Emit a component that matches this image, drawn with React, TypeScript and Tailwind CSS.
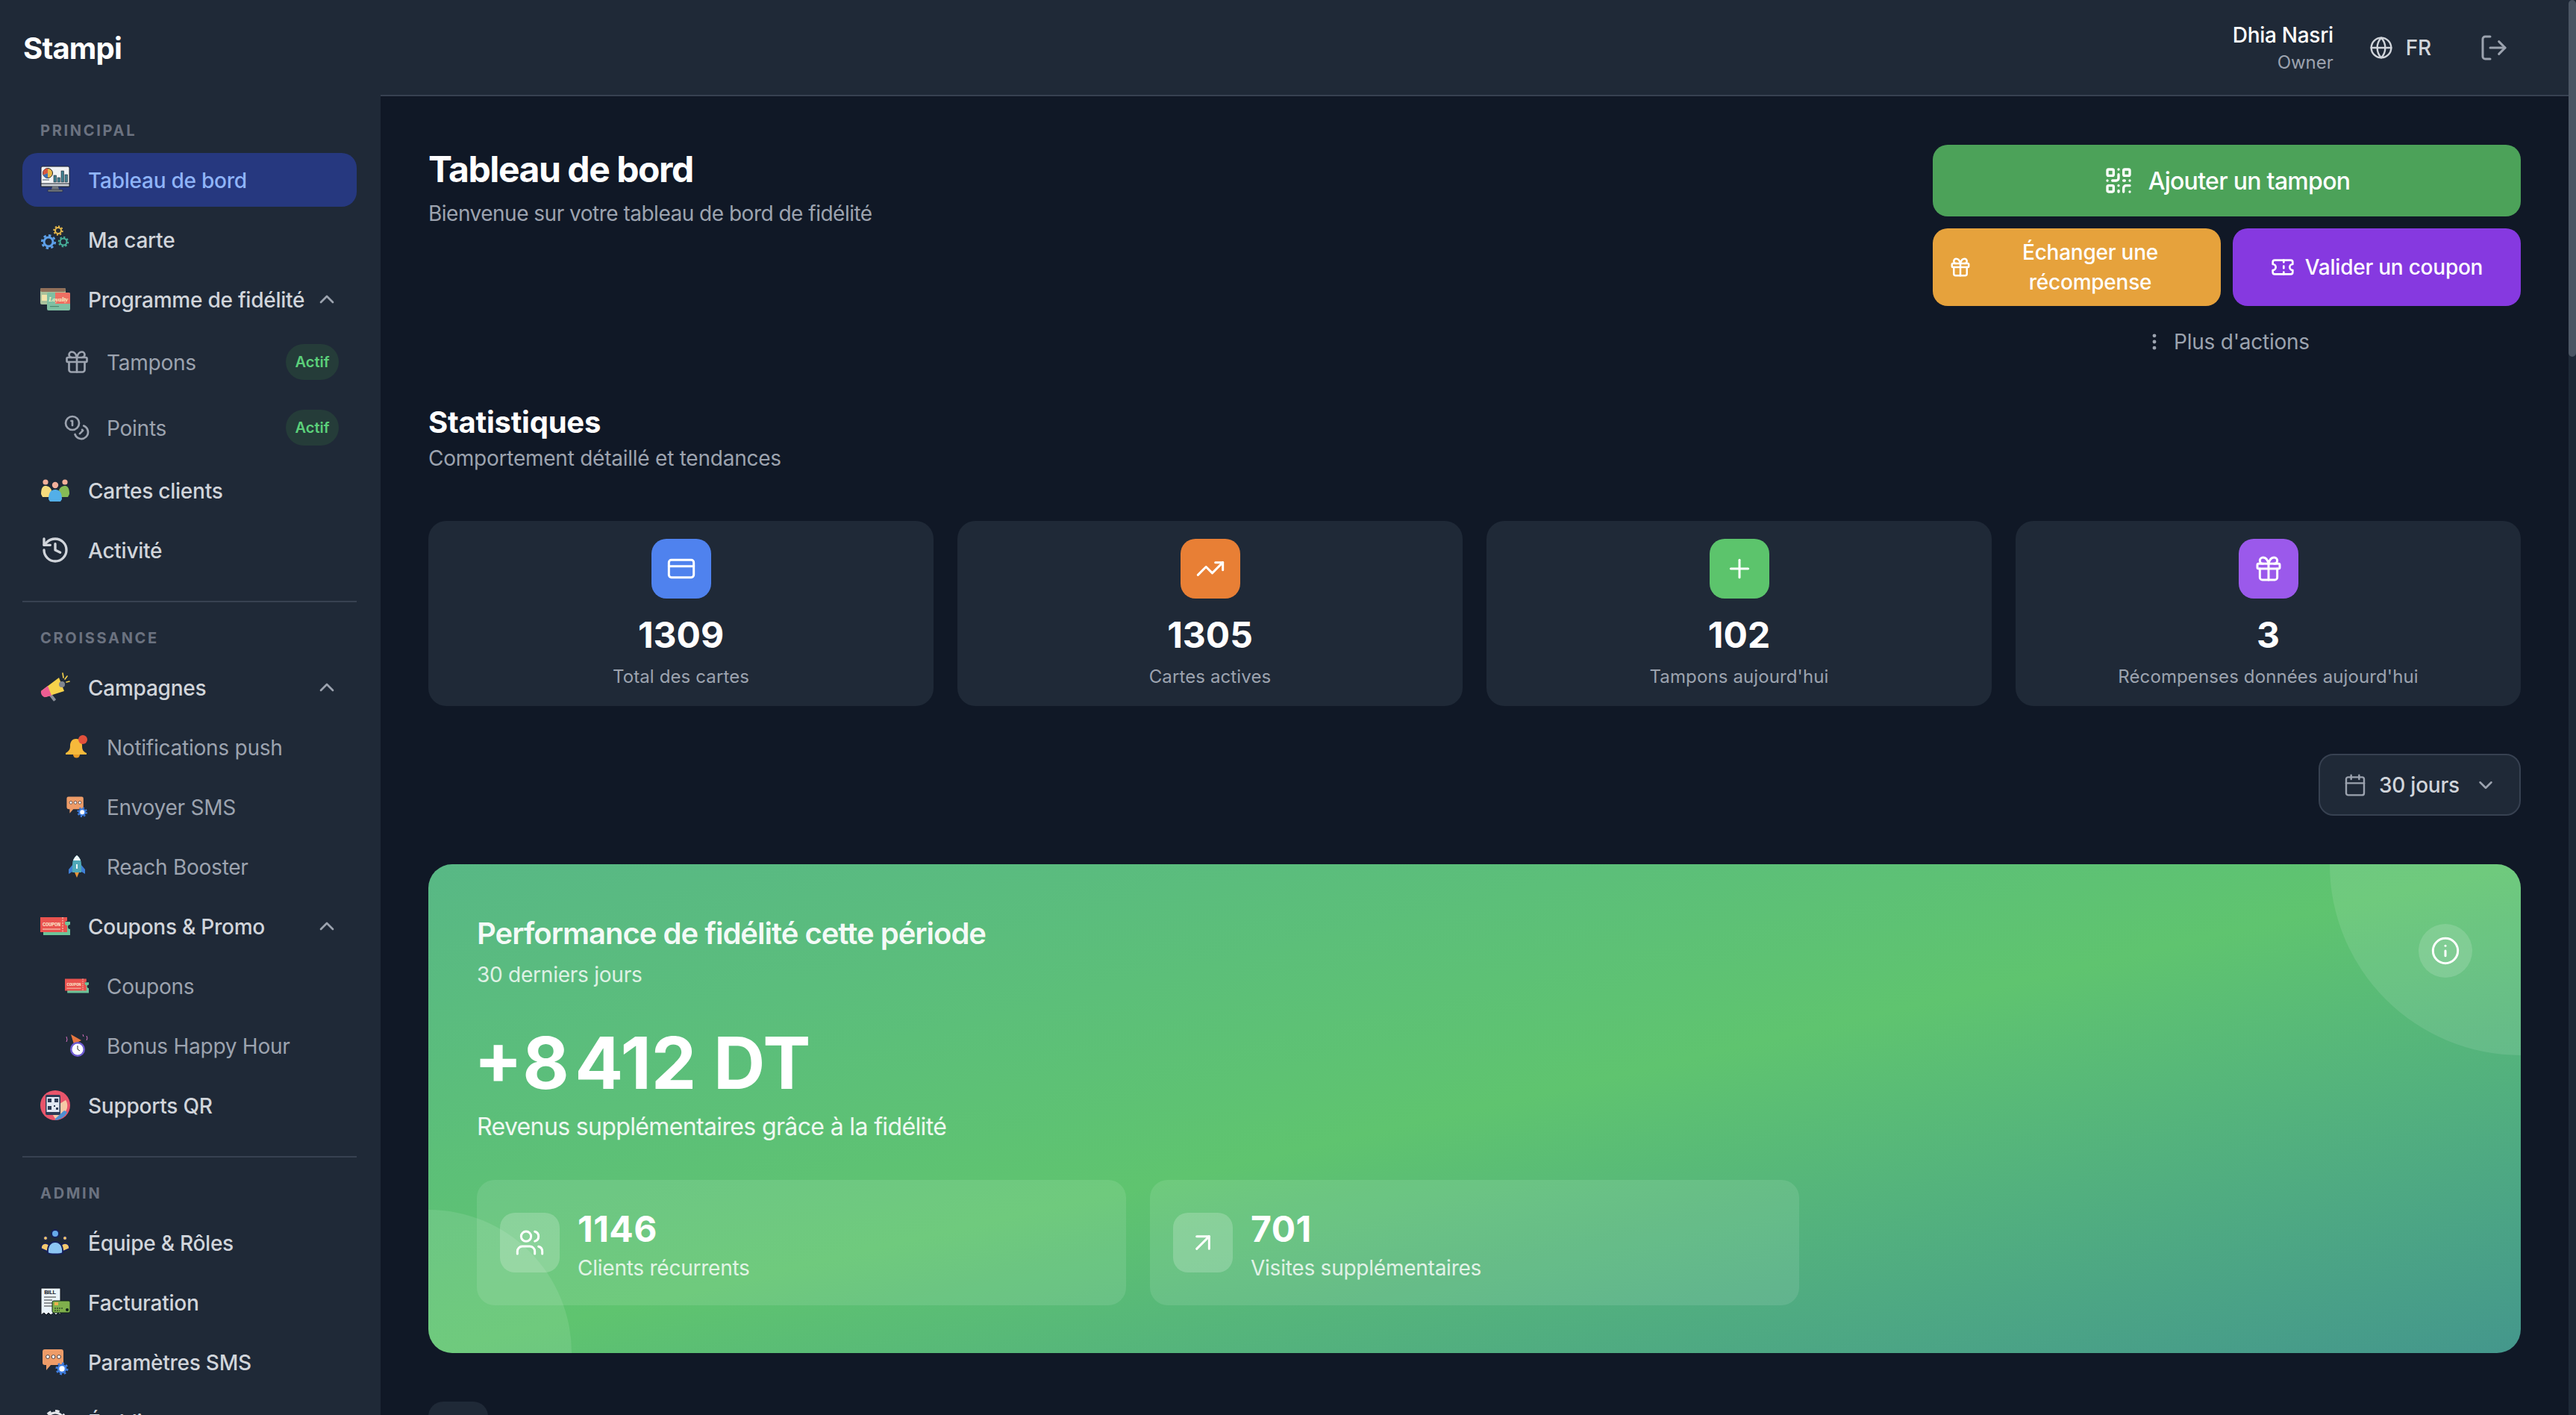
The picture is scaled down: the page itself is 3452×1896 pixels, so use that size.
import React from 'react'
import {
  ArrowUpRight, Calendar, ChevronDown, ChevronUp, Coins, CreditCard, EllipsisVertical, Gift, Globe,
  History, Info, LogOut, Plus, QrCode, Ticket, TrendingUp, Users,
} from 'lucide-react'

const Gear = ({ x, y, r, color, w = 2 }: { x: number; y: number; r: number; color: string; w?: number }) => (
  <g fill="none" stroke={color}>
    <circle cx={x} cy={y} r={r} strokeWidth={w} />
    <circle cx={x} cy={y} r={r + w * 0.9} strokeWidth={w * 0.9} pathLength={16} strokeDasharray="1 1" />
  </g>
)

const IconBoard = () => (
  <svg viewBox="0 0 40 40" className="w-full h-full">
    <rect x="1" y="2" width="38" height="27" rx="2" fill="#f1f3f4" stroke="#1f2430" strokeWidth="1" />
    <rect x="1" y="25" width="38" height="4" fill="#c9ced3" stroke="#1f2430" strokeWidth="1" />
    <circle cx="10" cy="11" r="6.5" fill="#e9b949" stroke="#1f2430" strokeWidth="1" />
    <path d="M10 11V4.5a6.5 6.5 0 0 0-6 9z" fill="#d9573f" />
    <path d="M10 11l-6 2.5a6.5 6.5 0 0 0 6 4z" fill="#3f6fb5" />
    <rect x="3" y="19" width="9" height="2" fill="#9aa1a8" />
    <rect x="18" y="14" width="3.5" height="9" fill="#41808f" stroke="#1f2430" strokeWidth=".6" />
    <rect x="23" y="17" width="3.5" height="6" fill="#41808f" stroke="#1f2430" strokeWidth=".6" />
    <rect x="28" y="8" width="3.5" height="15" fill="#41808f" stroke="#1f2430" strokeWidth=".6" />
    <rect x="33" y="13" width="3.5" height="10" fill="#41808f" stroke="#1f2430" strokeWidth=".6" />
    <path d="M16 29h8l1 4h-10z" fill="#70767d" />
    <rect x="10" y="33" width="20" height="3" rx="1" fill="#70767d" stroke="#1f2430" strokeWidth=".6" />
  </svg>
)
const IconGears = () => (
  <svg viewBox="0 0 40 40" className="w-full h-full">
    <Gear x={24} y={8} r={4} color="#e6b84c" w={2} />
    <Gear x={11} y={23} r={6} color="#5ea1ea" w={3} />
    <Gear x={31} y={23} r={4.5} color="#48b39d" w={2} />
  </svg>
)
const IconLoyalty = () => (
  <svg viewBox="0 0 40 40" className="w-full h-full">
    <rect x="0" y="5" width="34" height="22" rx="2" fill="#a9c29c" />
    <rect x="0" y="5" width="34" height="5" rx="2" fill="#92705a" />
    <rect x="2" y="14" width="7" height="8" fill="#f1e4ad" />
    <rect x="9" y="11" width="31" height="24" rx="2" fill="#7fbfa2" />
    <path d="M20 11h18a2 2 0 0 1 2 2v13L20 26z" fill="#ef6f62" />
    <text x="24" y="23" textAnchor="middle" fontFamily="Liberation Serif, serif" fontStyle="italic" fontWeight="700" fontSize="9" fill="#f6efc4">Loyalty</text>
    <rect x="13" y="29" width="12" height="1.2" fill="#4d8a70" />
  </svg>
)
const IconPeople = () => (
  <svg viewBox="0 0 40 40" className="w-full h-full">
    <circle cx="7" cy="9" r="3.6" fill="#f3b09a" />
    <circle cx="33" cy="9" r="3.6" fill="#f3b09a" />
    <path d="M1 25c0-9 3-11 6-11s7 2 8 6l-3 9H3z" fill="#f5db7d" />
    <path d="M39 25c0-9-3-11-6-11s-7 2-8 6l3 9h9z" fill="#86bb55" />
    <circle cx="20" cy="13" r="4.2" fill="#f3b09a" />
    <path d="M11 32c0-10 4-13 9-13s9 3 9 13l-2 3H13z" fill="#53afe8" />
  </svg>
)
const IconMegaphone = () => (
  <svg viewBox="0 0 40 40" className="w-full h-full">
    <rect x="14" y="29" width="4" height="10" rx="1" fill="#8a8f98" transform="rotate(-38 16 33)" />
    <path d="M1 25L25 7l7 18-25 8z" fill="#f6d24b" />
    <path d="M1 25l9-7 5 13-8 2c-3 1-7-4-6-8z" fill="#ee5d93" />
    <circle cx="29" cy="16" r="4" fill="#80868f" />
    <path d="M30 1l1 6M36 5l-3 4M39 12l-4 1" stroke="#f6d24b" strokeWidth="1.6" strokeLinecap="round" />
  </svg>
)
const IconBell = () => (
  <svg viewBox="0 0 32 32" className="w-full h-full">
    <path d="M15 5c-6 0-8 5-8 9 0 5-1 7-6 10v2h28v-2c-5-2-6-5-6-10 0-5-2-9-8-9z" fill="#f6b93b" />
    <path d="M11 26h9a4.5 4.5 0 0 1-9 0z" fill="#e89a26" />
    <circle cx="24" cy="6" r="6" fill="#e2503c" />
  </svg>
)
const IconSms = () => (
  <svg viewBox="0 0 40 40" className="w-full h-full">
    <path d="M6 3h22a3 3 0 0 1 3 3v15a3 3 0 0 1-3 3H14l-6 7v-7H6a3 3 0 0 1-3-3V6a3 3 0 0 1 3-3z" fill="#ee9c68" />
    <circle cx="10" cy="13" r="2.4" fill="#fff" stroke="#4a3b3b" /><circle cx="17.5" cy="13" r="2.4" fill="#fff" stroke="#4a3b3b" /><circle cx="25" cy="13" r="2.4" fill="#fff" stroke="#4a3b3b" />
    <circle cx="29" cy="29" r="5" fill="#fff" />
    <Gear x={29} y={29} r={5} color="#3e7de0" w={2.6} />
  </svg>
)
const IconRocket = () => (
  <svg viewBox="0 0 32 32" className="w-full h-full">
    <path d="M10 14l-5 6v6l5-3z" fill="#3f7fd6" /><path d="M22 14l5 6v6l-5-3z" fill="#3f7fd6" />
    <path d="M16 1c4 3 6 7 6 12v11H10V13c0-5 2-9 6-12z" fill="#4fa8b8" />
    <path d="M16 1c2.5 2 4 4 5 7H11c1-3 2.5-5 5-7z" fill="#eef6f8" />
    <path d="M13 24h6l-3 7z" fill="#e8963a" />
    <rect x="15" y="13" width="2" height="6" fill="#eef6f8" />
  </svg>
)
const IconCoupon = () => (
  <svg viewBox="0 0 40 40" className="w-full h-full">
    <path d="M4 14h36v4a3 3 0 0 0 0 6v8H4z" fill="#6cc59a" />
    <path d="M0 8h36v5a3 3 0 0 0 0 6v9H0z" fill="#e9534f" />
    <path d="M30 8v20" stroke="#fbe2c8" strokeWidth="1" strokeDasharray="2 1.5" />
    <path d="M3 24h24" stroke="#fbe2c8" strokeWidth="1" />
    <text x="15" y="20" textAnchor="middle" fontFamily="Liberation Mono, monospace" fontWeight="700" fontSize="7" fill="#fbe2c8">COUPON</text>
  </svg>
)
const IconHappy = () => (
  <svg viewBox="0 0 32 32" className="w-full h-full">
    <path d="M8 1l14 8-10 5z" fill="#e8773f" />
    <path d="M2 4l1 4-1 3M29 3l1 3-1 3M24 1l1 3" stroke="#d66ec0" strokeWidth="1" fill="none" />
    <circle cx="17" cy="21" r="10" fill="#6d5bd0" />
    <circle cx="17" cy="21" r="7.5" fill="#fff" />
    <path d="M17 16v5l3 2" stroke="#333" strokeWidth="1" fill="none" />
  </svg>
)
const IconQr = () => (
  <svg viewBox="0 0 40 40" className="w-full h-full">
    <circle cx="20" cy="20" r="20" fill="#e9556b" />
    <path d="M26 18l8-5c3 4 3 11 0 15-2 4-7 9-14 10l-5-8z" fill="#f6c9a6" />
    <path d="M20 38l12-11 4 2c-2 5-8 10-16 11z" fill="#4d8fd1" />
    <rect x="7" y="6" width="20" height="27" rx="2" fill="#2c3a55" />
    <rect x="8.5" y="9" width="17" height="20" fill="#dfe6f2" />
    <rect x="10" y="11" width="5" height="5" fill="#2c3a55" /><rect x="19" y="11" width="5" height="5" fill="#2c3a55" />
    <rect x="10" y="21" width="5" height="5" fill="#2c3a55" /><rect x="18" y="20" width="2" height="2" fill="#2c3a55" />
    <rect x="21" y="23" width="3" height="3" fill="#2c3a55" />
  </svg>
)
const IconTeam = () => (
  <svg viewBox="0 0 40 40" className="w-full h-full">
    <circle cx="20" cy="8" r="5" fill="#66a9ea" stroke="#16205a" strokeWidth="2" />
    <circle cx="7" cy="14" r="2.5" fill="#f4c86d" stroke="#16205a" /><circle cx="33" cy="14" r="2.5" fill="#f4c86d" stroke="#16205a" />
    <path d="M1 28c0-5 3-7 6-7 2 0 4 1 5 3l-2 8z" fill="#f4c86d" stroke="#16205a" strokeWidth="1.5" />
    <path d="M39 28c0-5-3-7-6-7-2 0-4 1-5 3l2 8z" fill="#f4c86d" stroke="#16205a" strokeWidth="1.5" />
    <path d="M10 34c-1-10 4-15 10-15s11 5 10 15c-3 2-17 2-20 0z" fill="#8cc5f3" stroke="#16205a" strokeWidth="2" />
  </svg>
)
const IconBill = () => (
  <svg viewBox="0 0 40 40" className="w-full h-full">
    <path d="M1 1h26v36l-3-3-3 3-3-3-4 3-3-3-3 3-3-3-4 3z" fill="#eaf4fb" stroke="#11151c" />
    <text x="13" y="9" textAnchor="middle" fontFamily="Liberation Sans, sans-serif" fontWeight="700" fontSize="7.5" fill="#11151c">BILL</text>
    <path d="M5 13h16M5 17h11M5 21h15M5 25h12" stroke="#333" strokeWidth="1" />
    <rect x="16" y="18" width="24" height="16" rx="2" fill="#7fb04c" stroke="#11251a" />
    <rect x="19" y="20" width="5" height="4" fill="#eeb24d" />
    <path d="M19 28h11M19 31h7" stroke="#11251a" strokeWidth="1" strokeDasharray="2 1" />
    <circle cx="36" cy="30" r="2" fill="#11251a" />
  </svg>
)
const IconGearWhite = () => (
  <svg viewBox="0 0 40 40" className="w-full h-full">
    <Gear x={20} y={20} r={12} color="#e5e7eb" w={3} />
  </svg>
)

const Badge = () => (
  <span className="w-[71px] h-[48px] mr-[24px] rounded-full bg-[#253c39] text-[#5bd07a] text-[20px] tracking-normal font-semibold flex items-center justify-center">Actif</span>
)

type RowProps = { icon: React.ReactNode; label: string; active?: boolean; sub?: boolean; open?: boolean; badge?: boolean }

const Row = ({ icon, label, active, sub, open, badge }: RowProps) => (
  <div className={`flex items-center rounded-[20px] ${badge ? 'h-[80px]' : 'h-[72px]'} ${active ? 'bg-[#26387f]' : ''} ${sub ? 'pl-[57px]' : 'pl-[24px]'}`}>
    <span className={`shrink-0 flex items-center justify-center ${sub ? 'w-[32px] h-[32px] mr-[24px]' : 'w-[40px] h-[40px] mr-[24px]'}`}>{icon}</span>
    <span className={`flex-1 pt-[2px] whitespace-nowrap text-[28px] ${active ? 'font-medium text-[#8fb4f8]' : sub ? 'text-[#9ca3af]' : 'font-medium text-[#d1d5db]'}`}>{label}</span>
    {open && <ChevronUp className="w-[32px] h-[32px] mr-[24px] text-[#9ca3af]" strokeWidth={2} />}
    {badge && <Badge />}
  </div>
)

const Section = ({ title, divider, children }: { title: string; divider?: boolean; children: React.ReactNode }) => (
  <div className={divider ? 'mt-[32px] border-t-2 border-[#374151] pt-[33px]' : ''}>
    <div className="h-[28px] mb-[17px] pl-[24px] text-[20px] leading-[28px] pt-[1px] font-bold uppercase tracking-[0.135em] text-[#6b7280]">{title}</div>
    <div className="flex flex-col gap-[8px]">{children}</div>
  </div>
)

const Sidebar = () => (
  <aside className="w-[510px] shrink-0 bg-[#1f2937] flex flex-col overflow-hidden">
    <div className="h-[129px] shrink-0 px-[31px] flex items-center text-[40px] font-bold tracking-[-0.02em] text-white">Stampi</div>
    <nav className="pl-[30px] pr-[32px] pt-[31px]">
      <Section title="Principal">
        <Row icon={<IconBoard />} label="Tableau de bord" active />
        <Row icon={<IconGears />} label="Ma carte" />
        <Row icon={<IconLoyalty />} label="Programme de fidélité" open />
        <Row icon={<Gift className="w-[36px] h-[36px] shrink-0 text-[#9ca3af]" strokeWidth={1.8} />} label="Tampons" sub badge />
        <Row icon={<Coins className="w-[36px] h-[36px] shrink-0 text-[#9ca3af]" strokeWidth={1.8} />} label="Points" sub badge />
        <Row icon={<IconPeople />} label="Cartes clients" />
        <Row icon={<History className="w-[40px] h-[40px] text-[#d1d5db]" strokeWidth={2} />} label="Activité" />
      </Section>
      <Section title="Croissance" divider>
        <Row icon={<IconMegaphone />} label="Campagnes" open />
        <Row icon={<IconBell />} label="Notifications push" sub />
        <Row icon={<IconSms />} label="Envoyer SMS" sub />
        <Row icon={<IconRocket />} label="Reach Booster" sub />
        <Row icon={<IconCoupon />} label="Coupons & Promo" open />
        <Row icon={<IconCoupon />} label="Coupons" sub />
        <Row icon={<IconHappy />} label="Bonus Happy Hour" sub />
        <Row icon={<IconQr />} label="Supports QR" />
      </Section>
      <Section title="Admin" divider>
        <Row icon={<IconTeam />} label="Équipe & Rôles" />
        <Row icon={<IconBill />} label="Facturation" />
        <Row icon={<IconSms />} label="Paramètres SMS" />
        <Row icon={<IconGearWhite />} label="Établissement" />
      </Section>
    </nav>
  </aside>
)

const stats = [
  { icon: CreditCard, bg: 'bg-[#4f82ee]', value: '1309', label: 'Total des cartes' },
  { icon: TrendingUp, bg: 'bg-[#e87f35]', value: '1305', label: 'Cartes actives' },
  { icon: Plus, bg: 'bg-[#5cc46c]', value: '102', label: "Tampons aujourd'hui" },
  { icon: Gift, bg: 'bg-[#9b59eb]', value: '3', label: "Récompenses données aujourd'hui" },
]

const StatCard = ({ icon: Icon, bg, value, label }: (typeof stats)[number]) => (
  <div className="h-[248px] bg-[#1f2937] rounded-[24px] pt-[24px] flex flex-col items-center">
    <div className={`w-[80px] h-[80px] rounded-[20px] flex items-center justify-center ${bg}`}>
      <Icon className="w-[40px] h-[40px] text-white" strokeWidth={1.8} />
    </div>
    <div className="mt-[21px] text-[48px] leading-[56px] tracking-normal font-bold text-white">{value}</div>
    <div className="mt-[12px] text-[24px] leading-[32px] tracking-[0.005em] text-[#9ca3af]">{label}</div>
  </div>
)

const MiniStat = ({ icon: Icon, value, label }: { icon: typeof Users; value: string; label: string }) => (
  <div className="h-[168px] bg-white/10 rounded-[24px] px-[31px] flex items-center gap-[24px]">
    <div className="w-[80px] h-[80px] rounded-[20px] bg-white/20 flex items-center justify-center">
      <Icon className="w-[40px] h-[40px] text-white" strokeWidth={1.8} />
    </div>
    <div className="pt-[8px]">
      <div className="text-[48px] leading-[56px] tracking-[0.01em] font-bold text-white">{value}</div>
      <div className="mt-[4px] text-[28px] leading-[40px] text-white/80">{label}</div>
    </div>
  </div>
)

const Hero = () => (
  <div className="relative h-[655px] mt-[65px] rounded-[32px] overflow-hidden bg-linear-to-br from-[#58b885] via-[#5fc46f] to-[#44978c] px-[65px] pt-[65px]">
    <div className="absolute -top-[256px] -right-[256px] w-[512px] h-[512px] rounded-full bg-white/10" />
    <div className="absolute -bottom-[192px] -left-[192px] w-[384px] h-[384px] rounded-full bg-white/10" />
    <div className="relative">
      <div className="flex justify-between">
        <div>
          <div className="text-[40px] leading-[56px] tracking-[-0.025em] font-semibold text-white/95">Performance de fidélité cette période</div>
          <div className="mt-[7px] text-[28px] leading-[40px] text-white/80">30 derniers jours</div>
        </div>
        <div className="w-[72px] h-[72px] mt-[15px] rounded-full bg-white/15 flex items-center justify-center">
          <Info className="w-[40px] h-[40px] text-white" strokeWidth={1.8} />
        </div>
      </div>
      <div className="mt-[42px] text-[96px] leading-[112px] tracking-normal -ml-[4px] font-bold text-white">+8&#8202;412 DT</div>
      <div className="mt-[8px] text-[32px] leading-[44px] tracking-[-0.02em] text-white/90">Revenus supplémentaires grâce à la fidélité</div>
      <div className="mt-[49px] w-[1772px] grid grid-cols-2 gap-[32px]">
        <MiniStat icon={Users} value="1146" label="Clients récurrents" />
        <MiniStat icon={ArrowUpRight} value="701" label="Visites supplémentaires" />
      </div>
    </div>
  </div>
)

export default function App() {
  return (
    <div className="relative h-[1896px] flex overflow-hidden bg-[#101826] font-['Inter',sans-serif] tracking-[-0.015em] antialiased">
      <Sidebar />
      <div className="flex-1 min-w-0 flex flex-col">
        <header className="h-[129px] shrink-0 bg-[#1f2937] border-b-2 border-[#374151] flex items-center justify-end pr-[90px]">
          <div className="text-right mr-[48px]">
            <div className="text-[28px] leading-[38px] tracking-[-0.01em] font-medium text-white">Dhia Nasri</div>
            <div className="text-[24px] leading-[32px] mt-[2px] tracking-normal text-[#9ca3af]">Owner</div>
          </div>
          <Globe className="w-[32px] h-[32px] text-[#d1d5db] mr-[17px]" strokeWidth={1.8} />
          <span className="text-[28px] font-medium text-[#d1d5db] mr-[64px]">FR</span>
          <LogOut className="w-[40px] h-[40px] text-[#9ca3af]" strokeWidth={1.8} />
        </header>
        <main className="pl-[64px] pr-[74px] pt-[65px]">
          <div className="flex justify-between">
            <div>
              <h1 className="pt-[1px] text-[48px] leading-[64px] tracking-[-0.03em] font-bold text-white">Tableau de bord</h1>
              <p className="mt-[7px] text-[28px] leading-[40px] tracking-[-0.018em] text-[#9ca3af]">Bienvenue sur votre tableau de bord de fidélité</p>
            </div>
            <div className="w-[788px] flex flex-col gap-[16px]">
              <button className="h-[96px] rounded-[20px] bg-[#4ca259] flex items-center justify-center gap-[20px] text-[32px] tracking-[-0.022em] font-medium text-white">
                <QrCode className="w-[40px] h-[40px]" strokeWidth={2} />
                <span className="pt-[2px]">Ajouter un tampon</span>
              </button>
              <div className="grid grid-cols-2 gap-[16px]">
                <button className="h-[104px] rounded-[20px] bg-[#e6a23c] flex items-center pl-[22px] pr-[16px] text-[28px] leading-[40px] font-medium text-white">
                  <Gift className="w-[30px] h-[30px] shrink-0" strokeWidth={2} />
                  <span className="flex-1 text-center">Échanger une récompense</span>
                </button>
                <button className="h-[104px] rounded-[20px] bg-[#8639e0] flex items-center justify-center gap-[14px] text-[28px] font-medium text-white">
                  <Ticket className="w-[32px] h-[32px]" strokeWidth={2} />
                  Valider un coupon
                </button>
              </div>
              <div className="h-[48px] mt-[8px] flex items-center justify-center gap-[12px] text-[28px] text-[#9ca3af]">
                <EllipsisVertical className="w-[28px] h-[28px]" strokeWidth={2.2} />
                Plus d'actions
              </div>
            </div>
          </div>
          <h2 className="mt-[60px] text-[40px] leading-[48px] font-bold text-white">Statistiques</h2>
          <p className="mt-[4px] text-[28px] leading-[40px] text-[#9ca3af]">Comportement détaillé et tendances</p>
          <div className="mt-[64px] grid grid-cols-4 gap-[32px]">
            {stats.map((s) => <StatCard key={s.label} {...s} />)}
          </div>
          <div className="mt-[64px] flex justify-end">
            <div className="h-[83px] w-[271px] rounded-[20px] border-2 border-[#374151] bg-[#1f2937] flex items-center pl-[31px] gap-[16px] text-[28px] font-medium text-[#d1d5db]">
              <Calendar className="w-[32px] h-[32px] text-[#9ca3af]" strokeWidth={1.8} />
              30 jours
              <ChevronDown className="w-[30px] h-[30px] ml-[4px] text-[#9ca3af]" strokeWidth={2} />
            </div>
          </div>
          <Hero />
          <div className="mt-[65px] flex items-start gap-[23px]">
            <div className="w-[80px] h-[80px] rounded-[20px] bg-[#1f2937]" />
            <div className="mt-[11px] text-[40px] leading-[48px] font-bold text-white">Analyses</div>
          </div>
        </main>
      </div>
      {/* scrollbar */}
      <div className="absolute top-0 right-0 w-[10px] h-full bg-[#1f2937]">
        <div className="w-full h-[478px] rounded-full bg-[#4b5563]" />
      </div>
    </div>
  )
}
